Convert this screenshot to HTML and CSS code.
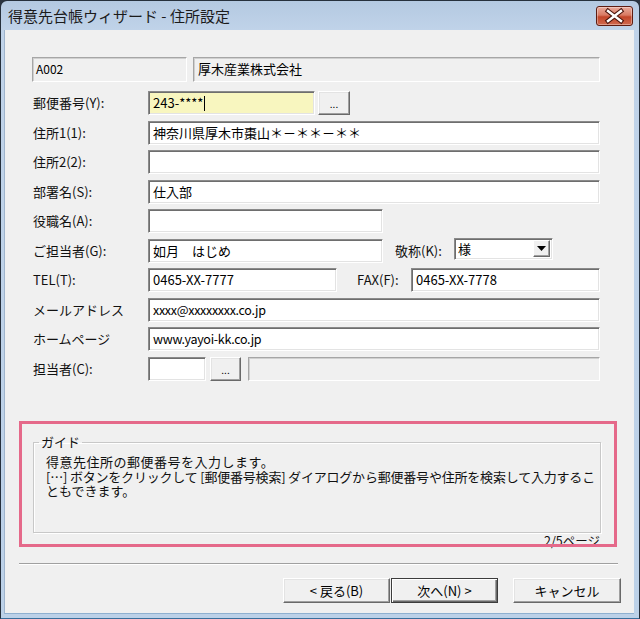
FILE: index.html
```html
<!DOCTYPE html>
<html lang="ja">
<head>
<meta charset="utf-8">
<title>得意先台帳ウィザード - 住所設定</title>
<link rel="stylesheet" href="styles.css">
</head>
<body>
<div class="window">
  <div class="titlebar">
    <span class="title">得意先台帳ウィザード - 住所設定</span>
    <div class="close">
      <svg width="37" height="20" viewBox="0 0 37 20">
        <path d="M12 5 L25 15 M25 5 L12 15" stroke="#4a140c" stroke-width="4.6" stroke-linecap="square" fill="none"/>
        <path d="M12 5 L25 15 M25 5 L12 15" stroke="#ffffff" stroke-width="2.4" stroke-linecap="square" fill="none"/>
      </svg>
    </div>
  </div>
  <div class="client">
    <div class="form">
      <div class="row row-top">
        <div class="field ro code">A002</div>
        <div class="field ro grow">厚木産業株式会社</div>
      </div>
      <div class="row">
        <span class="label">郵便番号(Y):</span>
        <div class="field zip">243-****<span class="caret"></span></div>
        <div class="btn dots zip-btn">...</div>
      </div>
      <div class="row">
        <span class="label">住所1(1):</span>
        <div class="field grow">神奈川県厚木市棗山＊－＊＊－＊＊</div>
      </div>
      <div class="row">
        <span class="label">住所2(2):</span>
        <div class="field grow"></div>
      </div>
      <div class="row">
        <span class="label">部署名(S):</span>
        <div class="field grow">仕入部</div>
      </div>
      <div class="row">
        <span class="label">役職名(A):</span>
        <div class="field mid"></div>
      </div>
      <div class="row">
        <span class="label">ご担当者(G):</span>
        <div class="field mid">如月　はじめ</div>
        <span class="label keisho">敬称(K):</span>
        <div class="select">
          <span class="select-text">様</span>
          <span class="drop"><svg width="9" height="5" viewBox="0 0 9 5"><path d="M0 0 H9 L4.5 5 Z" fill="#000"/></svg></span>
        </div>
      </div>
      <div class="row">
        <span class="label">TEL(T):</span>
        <div class="field tel">0465-XX-7777</div>
        <span class="label fax">FAX(F):</span>
        <div class="field grow">0465-XX-7778</div>
      </div>
      <div class="row">
        <span class="label">メールアドレス</span>
        <div class="field grow latin">xxxx@xxxxxxxx.co.jp</div>
      </div>
      <div class="row">
        <span class="label">ホームページ</span>
        <div class="field grow latin">www.yayoi-kk.co.jp</div>
      </div>
      <div class="row">
        <span class="label">担当者(C):</span>
        <div class="field small"></div>
        <div class="btn dots staff-btn">...</div>
        <div class="field ro grow staff-name"></div>
      </div>
    </div>

    <fieldset class="guide">
      <legend>ガイド</legend>
      <div class="guide-text">
        <div class="gl l1">得意先住所の郵便番号を入力します。</div>
        <div class="gl l2">[…]&nbsp;ボタンをクリックして&nbsp;[郵便番号検索]&nbsp;ダイアログから郵便番号や住所を検索して入力するこ</div>
        <div class="gl">ともできます。</div>
      </div>
    </fieldset>
    <div class="pager">2/5ページ</div>
    <div class="sep"></div>
    <div class="buttons">
      <div class="btn push">&lt; 戻る(B)</div>
      <div class="btn push default">次へ(N) &gt;</div>
      <div class="btn push cancel">キャンセル</div>
    </div>

    <div class="highlight"></div>
  </div>
</div>
</body>
</html>
```

FILE: styles.css
```css
* { box-sizing: border-box; }
html, body { margin: 0; padding: 0; }
body {
  width: 640px;
  height: 619px;
  overflow: hidden;
  background: #2b3440;
  font-family: "Noto Sans CJK JP", "Noto Sans", sans-serif;
  color: #000;
}
.window {
  width: 640px;
  height: 619px;
  display: flex;
  flex-direction: column;
  background: linear-gradient(to bottom, #b4c9e1 0px, #c0d3e9 29px, #bcd1e8 100%);
  border: 1px solid #26303c;
  border-bottom-color: #3a6f9c;
  border-radius: 7px 7px 0 0;
  padding: 0 5px 4px 3px;
}
.titlebar {
  height: 29px;
  flex: none;
  display: flex;
  align-items: flex-start;
  justify-content: space-between;
  padding-left: 4px;
}
.title {
  font-size: 15px;
  line-height: 29px;
  color: #1b1b1b;
  white-space: nowrap;
}
.close {
  margin-top: 5px;
  margin-right: 1px;
  width: 37px;
  height: 20px;
  border: 1px solid #5e1c11;
  border-radius: 3px;
  background: linear-gradient(to bottom, #e9ab9c 0%, #d97a63 45%, #c24529 55%, #d06a4f 100%);
  box-shadow: inset 0 0 0 1px rgba(255,255,255,0.35);
  display: flex;
  align-items: center;
  justify-content: center;
  overflow: hidden;
}
.close svg { display: block; flex: none; }

.client {
  flex: 1;
  position: relative;
  background: #f0f0f0;
  border-left: 1px solid #9fb4cc;
  border-bottom: 1px solid #8fb0d0;
}
.form {
  display: flex;
  flex-direction: column;
  gap: 5.5px;
  padding: 27px 34px 0 27px;
}
.row {
  display: flex;
  align-items: center;
  height: 24px;
}
.row-top {
  height: 25px;
  margin-bottom: 3.5px;
  gap: 6px;
}
.label {
  flex: none;
  width: 116px;
  padding-left: 1px;
  font-size: 13px;
  line-height: 24px;
  white-space: nowrap;
  color: #111;
}
.field {
  height: 100%;
  background: #fff;
  border-style: solid;
  border-width: 1px;
  border-color: #8a8a8a #ffffff #ffffff #8a8a8a;
  box-shadow: inset 1px 1px 0 #6e6e6e, inset -1px -1px 0 #e3e3e3;
  font-size: 13px;
  line-height: 21px;
  padding-left: 4px;
  white-space: nowrap;
  overflow: hidden;
  color: #000;
}
.field.ro {
  background: #f0f0f0;
  border-color: #a6a6a6 #ffffff #ffffff #a6a6a6;
  box-shadow: inset 1px 1px 0 #d0d0d0;
}
.grow { flex: 1; }
.code { width: 155px; flex: none; font-size: 12px; padding-left: 3px; }
.zip { width: 167px; flex: none; background: #f8f6bf; }
.caret {
  display: inline-block;
  width: 1px;
  height: 15px;
  background: #000;
  vertical-align: -3px;
  margin-left: 1px;
}
.mid { width: 235px; flex: none; }
.tel { width: 189px; flex: none; }
.small { width: 58px; flex: none; }
.latin { font-size: 12.5px; letter-spacing: -0.3px; }
.keisho { width: 60px; margin-left: 11px; }
.fax { width: 55px; margin-left: 19px; }

.btn {
  background: #f0f0f0;
  border-style: solid;
  border-width: 1px;
  border-color: #ffffff #696969 #696969 #ffffff;
  box-shadow: inset -1px -1px 0 #a0a0a0, inset 1px 1px 0 #e3e3e3;
  text-align: center;
  color: #000;
}
.dots {
  height: 100%;
  font-size: 10px;
  line-height: 24px;
  flex: none;
}
.zip-btn { width: 32px; margin-left: 3px; }
.staff-btn { width: 31px; margin-left: 4px; }
.staff-name { margin-left: 7px; }

.select {
  flex: none;
  width: 99px;
  height: 22px;
  margin-top: -4px;
  display: flex;
  align-items: center;
  justify-content: space-between;
  background: #fff;
  border-style: solid;
  border-width: 1px;
  border-color: #8a8a8a #ffffff #ffffff #8a8a8a;
  box-shadow: inset 1px 1px 0 #6e6e6e, inset -1px -1px 0 #e3e3e3;
  padding: 2px 2px 2px 3px;
}
.select-text { font-size: 13px; line-height: 18px; }
.drop {
  width: 17px;
  height: 17px;
  display: flex;
  align-items: center;
  justify-content: center;
  background: #f0f0f0;
  border-style: solid;
  border-width: 1px;
  border-color: #ffffff #696969 #696969 #ffffff;
  box-shadow: inset -1px -1px 0 #a0a0a0;
}
.drop svg { display: block; }

.guide {
  margin: 54.5px 33px 0 28px;
  height: 98px;
  border: 1px solid #c8c8c8;
  box-shadow: 1px 1px 0 #ffffff, inset 1px 1px 0 #ffffff;
  padding: 0 4px 0 12px;
  min-width: 0;
}
.guide legend {
  font-size: 13px;
  line-height: 14px;
  padding: 0 2px;
  margin-left: -7px;
  color: #111;
}
.guide-text {
  margin: 6px 0 0 0;
  font-size: 13px;
  color: #111;
}
.gl {
  height: 14.5px;
  line-height: 14.5px;
  white-space: nowrap;
}
.l1 { letter-spacing: 0.5px; }
.l2 { letter-spacing: -0.2px; }
.pager {
  height: 16px;
  font-size: 12.5px;
  line-height: 16px;
  text-align: right;
  padding-right: 34px;
  color: #111;
}
.sep {
  margin: 14px 16px 0 14px;
  height: 2px;
  border-top: 1px solid #a0a0a0;
  border-bottom: 1px solid #ffffff;
}
.buttons {
  display: flex;
  justify-content: flex-end;
  gap: 1px;
  margin-top: 13px;
  padding-right: 13px;
}
.push {
  width: 107px;
  height: 25px;
  font-size: 13px;
  line-height: 23px;
}
.default {
  border: 1px solid #3c3c3c;
  box-shadow: inset 1px 1px 0 #ffffff, inset -1px -1px 0 #696969, inset -2px -2px 0 #a0a0a0;
}
.cancel { margin-left: 14px; width: 108px; }

.highlight {
  position: absolute;
  left: 14px;
  top: 391px;
  width: 598px;
  height: 126px;
  border: 3px solid #e5698a;
  pointer-events: none;
}
```
